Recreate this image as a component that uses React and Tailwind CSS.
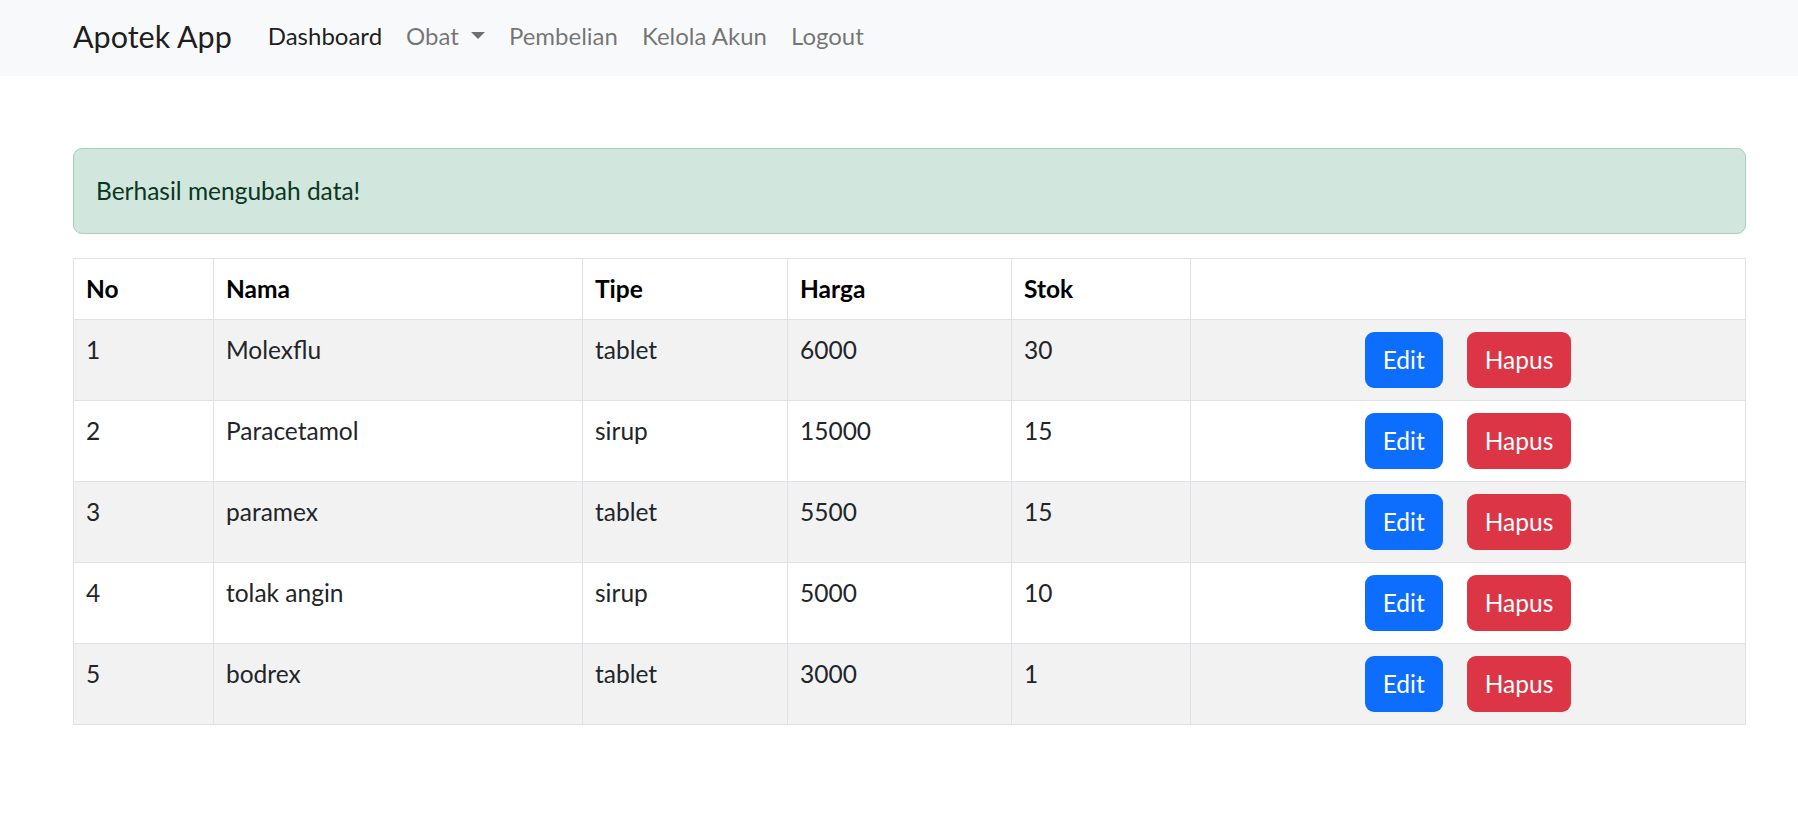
import React from "react";

const obat = [
  { id: 1, nama: "Molexflu", tipe: "tablet", harga: 6000, stok: 30 },
  { id: 2, nama: "Paracetamol", tipe: "sirup", harga: 15000, stok: 15 },
  { id: 3, nama: "paramex", tipe: "tablet", harga: 5500, stok: 15 },
  { id: 4, nama: "tolak angin", tipe: "sirup", harga: 5000, stok: 10 },
  { id: 5, nama: "bodrex", tipe: "tablet", harga: 3000, stok: 1 },
];

const App = () => {
  return (
    <div className="min-h-screen bg-white text-[#212529] font-['Lato','Noto_Sans',sans-serif] text-[24.5px] leading-[36px]">
      {/* Navbar */}
      <nav className="bg-[#f8f9fa] h-[76px] flex items-center pl-[73px] pb-[4px]">
        <span className="text-[30.5px] text-black/90 mr-[24px]">Apotek App</span>
        <ul className="flex items-center text-[24px]">
          <li className="px-[12px] text-black/90">Dashboard</li>
          <li className="px-[12px] text-black/55 flex items-center">
            Obat
            <svg className="ml-[12px] w-[14px] h-[8px]" viewBox="0 0 14 8">
              <polygon points="0,0 14,0 7,7" fill="currentColor" />
            </svg>
          </li>
          <li className="px-[12px] text-black/55">Pembelian</li>
          <li className="px-[12px] text-black/55">Kelola Akun</li>
          <li className="px-[12px] text-black/55">Logout</li>
        </ul>
      </nav>

      <div className="pl-[73px] pr-[52px] pt-[72px]">
        {/* Alert */}
        <div className="bg-[#d1e7dd] border border-[#a3cfbb] text-[#0a3622] rounded-[9px] px-[22px] py-[24px] mb-[24px]">
          Berhasil mengubah data!
        </div>

        {/* Tabel obat */}
        <table className="w-full table-fixed border-collapse border border-[#dee2e6]">
          <thead>
            <tr className="text-left font-bold text-black">
              <th className="w-[140px] border border-[#dee2e6] px-[12px] py-[12px] align-bottom">No</th>
              <th className="w-[369px] border border-[#dee2e6] px-[12px] py-[12px] align-bottom">Nama</th>
              <th className="w-[205px] border border-[#dee2e6] px-[12px] py-[12px] align-bottom">Tipe</th>
              <th className="w-[224px] border border-[#dee2e6] px-[12px] py-[12px] align-bottom">Harga</th>
              <th className="w-[179px] border border-[#dee2e6] px-[12px] py-[12px] align-bottom">Stok</th>
              <th className="border border-[#dee2e6] px-[12px] py-[12px]"></th>
            </tr>
          </thead>
          <tbody>
            {obat.map((o, i) => (
              <tr key={o.id} className={i % 2 === 0 ? "bg-[#f2f2f2]" : "bg-white"}>
                <td className="border border-[#dee2e6] px-[12px] py-[12px] align-top">{o.id}</td>
                <td className="border border-[#dee2e6] px-[12px] py-[12px] align-top">{o.nama}</td>
                <td className="border border-[#dee2e6] px-[12px] py-[12px] align-top">{o.tipe}</td>
                <td className="border border-[#dee2e6] px-[12px] py-[12px] align-top">{o.harga}</td>
                <td className="border border-[#dee2e6] px-[12px] py-[12px] align-top">{o.stok}</td>
                <td className="border border-[#dee2e6] px-[12px] py-[12px] align-top">
                  <div className="flex justify-center gap-[24px]">
                    <button className="bg-[#0d6efd] text-white rounded-[9px] h-[56px] px-[18px] leading-[36px]">
                      Edit
                    </button>
                    <button className="bg-[#dc3545] text-white rounded-[9px] h-[56px] px-[18px] leading-[36px]">
                      Hapus
                    </button>
                  </div>
                </td>
              </tr>
            ))}
          </tbody>
        </table>
      </div>
    </div>
  );
};

export default App;
